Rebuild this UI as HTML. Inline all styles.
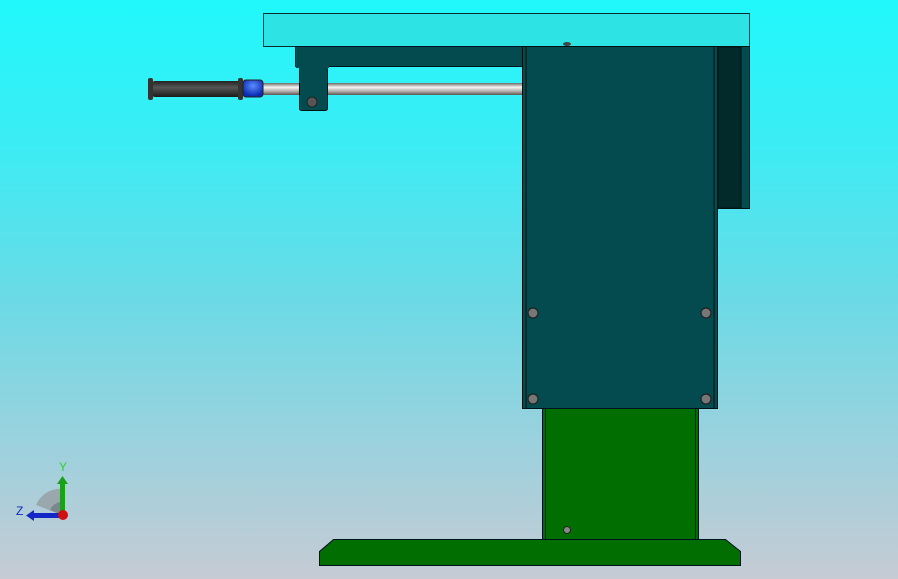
<!DOCTYPE html>
<html><head><style>
body{margin:0;width:898px;height:579px;overflow:hidden;background:linear-gradient(#20f8fb 0%,#3cecf4 25%,#68dbe6 50%,#98d2de 75%,#c6cbd4 100%);font-family:"Liberation Sans",sans-serif}
svg{position:absolute;left:0;top:0}
</style></head><body>
<svg width="898" height="579" viewBox="0 0 898 579">
<defs>
<linearGradient id="rod" x1="0" y1="0" x2="0" y2="1"><stop offset="0" stop-color="#6d6a66"/><stop offset=".35" stop-color="#f4f4f2"/><stop offset=".7" stop-color="#b0aca8"/><stop offset="1" stop-color="#5a5550"/></linearGradient>
<linearGradient id="hand" x1="0" y1="0" x2="0" y2="1"><stop offset="0" stop-color="#222"/><stop offset=".4" stop-color="#555"/><stop offset="1" stop-color="#1a1a1a"/></linearGradient>
<radialGradient id="blue" cx=".5" cy=".35" r=".6"><stop offset="0" stop-color="#5a8cff"/><stop offset="1" stop-color="#0a2ab0"/></radialGradient>
</defs>
<!-- top plate -->
<rect x="263.5" y="13.5" width="486" height="33" fill="#2ee3e3" stroke="#0a2a2a"/>
<!-- under plate -->
<rect x="295.5" y="46.5" width="228" height="20" fill="#034b4f" stroke="#012"/>
<!-- rod -->
<rect x="245" y="83" width="278" height="12" fill="url(#rod)"/>
<!-- bracket -->
<rect x="299.5" y="67.5" width="28" height="43" rx="2" fill="#034b4f" stroke="#011"/>
<rect x="296" y="64" width="33" height="4" fill="#034b4f"/>
<circle cx="312" cy="102" r="5" fill="#555" stroke="#222"/>
<!-- handle -->
<rect x="152" y="81" width="90" height="16" rx="3" fill="url(#hand)"/>
<rect x="148" y="78" width="5" height="22" rx="2" fill="#333"/>
<rect x="238" y="78" width="5" height="22" rx="2" fill="#333"/>
<rect x="243" y="80" width="20" height="17" rx="3" fill="url(#blue)" stroke="#222"/>
<!-- right side part -->
<rect x="716.5" y="46.5" width="33" height="162" fill="#034b4f" stroke="#011"/>
<rect x="718" y="47" width="23" height="161" fill="#022a2a" stroke="#011"/>
<!-- main body -->
<rect x="522.5" y="46.5" width="195" height="362" fill="#034b4f" stroke="#011"/>
<line x1="526" y1="47" x2="526" y2="408" stroke="#011"/>
<line x1="714" y1="47" x2="714" y2="408" stroke="#011"/>
<ellipse cx="567" cy="44" rx="4" ry="2" fill="#444"/>
<g fill="#777" stroke="#222" stroke-width="1.2">
<circle cx="533" cy="313" r="5"/><circle cx="706" cy="313" r="5"/><circle cx="533" cy="399" r="5"/><circle cx="706" cy="399" r="5"/>
</g>
<!-- green column -->
<rect x="542.5" y="408.5" width="156" height="131" fill="#006e00" stroke="#012"/>
<line x1="545.5" y1="409" x2="545.5" y2="539" stroke="#012"/>
<line x1="695.5" y1="409" x2="695.5" y2="539" stroke="#012"/>
<circle cx="567" cy="530" r="3.5" fill="#888" stroke="#222"/>
<!-- base -->
<polygon points="333.5,539.5 725.5,539.5 740.5,551.5 740.5,565.5 319.5,565.5 319.5,551.5" fill="#006e00" stroke="#012"/>
<!-- triad -->
<path d="M36 505 A26 26 0 0 1 62 489 L62 515 Z" fill="#9aa8ae"/>
<path d="M50 510 A13 13 0 0 1 62 502 L62 515 Z" fill="#7a878c"/>
<rect x="60" y="483" width="5" height="31" fill="#1aa01a"/>
<polygon points="57,484 62.5,476 68,484" fill="#1aa01a"/>
<rect x="33" y="513" width="29" height="5" fill="#1428c8"/>
<polygon points="34,510 26,515.5 34,521" fill="#1428c8"/>
<circle cx="63" cy="515" r="5" fill="#d01010"/>
<text x="59" y="471" font-size="12" fill="#30d030">Y</text>
<text x="16" y="515" font-size="12" fill="#1428c8">Z</text>
</svg>
</body></html>
